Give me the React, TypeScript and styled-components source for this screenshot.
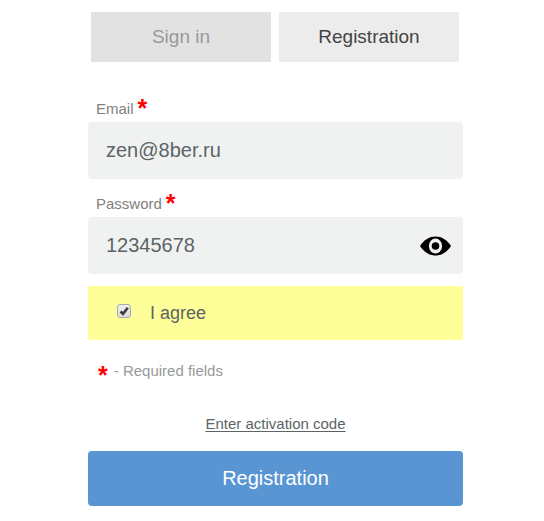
import React, { useState } from "react";
import styled, { createGlobalStyle } from "styled-components";

const GlobalStyle = createGlobalStyle`
  *, *::before, *::after { box-sizing: border-box; }
  body {
    margin: 0;
    background: #fff;
    color: #5a6268;
    font-family: "Liberation Sans", Arial, sans-serif;
  }
  button, input { font-family: inherit; }
`;

const Page = styled.main`
  padding: 12px 16px 15px 23px;
`;

const Panel = styled.form`
  display: flex;
  flex-direction: column;
  max-width: 375px;
  margin: 0 auto;
`;

const Tabs = styled.div`
  display: flex;
  gap: 8px;
  padding: 0 4px 0 3px;
  margin-bottom: 32px;
`;

const Tab = styled.button<{ $active: boolean }>`
  flex: 1;
  height: 50px;
  padding: 0;
  border: 0;
  background: ${(p) => (p.$active ? "#ececec" : "#e2e2e2")};
  color: ${(p) => (p.$active ? "#444" : "#999")};
  font-size: 19px;
  cursor: pointer;
`;

const Field = styled.div`
  display: flex;
  flex-direction: column;
  margin-bottom: 10px;
`;

const Label = styled.label`
  display: flex;
  align-items: center;
  gap: 4px;
  height: 28px;
  padding-left: 8px;
  color: #808080;
  font-size: 15px;
`;

const Star = styled.span`
  color: #f00;
  font-size: 25px;
  font-weight: bold;
  line-height: 28px;
`;

const InputBox = styled.div`
  display: flex;
  align-items: center;
  height: 57px;
  padding: 0 12px 0 18px;
  border-radius: 4px;
  background: #f0f2f2;
`;

const Input = styled.input`
  flex: 1;
  min-width: 0;
  height: 100%;
  padding: 0;
  border: 0;
  outline: 0;
  background: transparent;
  color: #5c6466;
  font-size: 20px;
`;

const EyeButton = styled.button`
  display: flex;
  padding: 0;
  border: 0;
  background: transparent;
  cursor: pointer;
`;

const Agreement = styled.label`
  display: flex;
  align-items: center;
  height: 54px;
  margin-top: 2px;
  padding-left: 29px;
  gap: 19px;
  background: #ffff99;
  color: #5c6466;
  font-size: 18px;
`;

const CheckWrap = styled.span`
  display: grid;
  width: 14px;
  height: 14px;
  margin-bottom: 4px;

  > * { grid-area: 1 / 1; }
  svg { pointer-events: none; }
`;

const Checkbox = styled.input`
  appearance: none;
  width: 14px;
  height: 14px;
  margin: 0;
  border: 1px solid #aaa;
  border-radius: 3px;
  background: linear-gradient(#eee, #dcdcdc);
`;

const Required = styled.p`
  display: flex;
  align-items: center;
  gap: 6px;
  height: 28px;
  margin: 16px 0 0;
  padding-left: 10px;
  color: #999;
  font-size: 15px;

  ${Star} { padding-top: 10px; }
`;

const CodeLink = styled.a`
  align-self: center;
  margin: 31px 0 18px;
  color: #5c6466;
  font-size: 15px;
  line-height: 18px;
  text-underline-offset: 2px;
`;

const Submit = styled.button`
  height: 55px;
  border: 0;
  border-radius: 4px;
  background: #5995d3;
  color: #fff;
  font-size: 20px;
  cursor: pointer;
`;

function Eye() {
  return (
    <svg width="31" height="20" viewBox="0 0 31 20" aria-hidden="true">
      <path d="M0 10C4 3.8 9.5.5 15.5.5S27 3.8 31 10C27 16.2 21.5 19.5 15.5 19.5S4 16.2 0 10Z" fill="#000" />
      <ellipse cx="15.5" cy="10" rx="6.6" ry="7.4" fill="#f0f2f2" />
      <circle cx="15.5" cy="10" r="3.8" fill="#000" />
    </svg>
  );
}

export default function App() {
  const [tab, setTab] = useState("Registration");
  const [agreed, setAgreed] = useState(true);
  const [visible, setVisible] = useState(true);

  return (
    <Page>
      <GlobalStyle />
      <Panel onSubmit={(e) => e.preventDefault()}>
        <Tabs>
          {["Sign in", "Registration"].map((name) => (
            <Tab key={name} type="button" $active={tab === name} onClick={() => setTab(name)}>
              {name}
            </Tab>
          ))}
        </Tabs>
        <Field>
          <Label htmlFor="email">Email <Star>*</Star></Label>
          <InputBox>
            <Input id="email" type="email" defaultValue="zen@8ber.ru" />
          </InputBox>
        </Field>
        <Field>
          <Label htmlFor="password">Password <Star>*</Star></Label>
          <InputBox>
            <Input id="password" type={visible ? "text" : "password"} defaultValue="12345678" />
            <EyeButton type="button" aria-label="Toggle password" onClick={() => setVisible(!visible)}>
              <Eye />
            </EyeButton>
          </InputBox>
        </Field>
        <Agreement>
          <CheckWrap>
            <Checkbox type="checkbox" checked={agreed} onChange={(e) => setAgreed(e.target.checked)} />
            {agreed && (
              <svg width="14" height="14" viewBox="0 0 14 14" aria-hidden="true">
                <path d="M3.5 7.5L6 9.8L10.8 3.8" fill="none" stroke="#3c3c3c" strokeWidth="2.6" />
              </svg>
            )}
          </CheckWrap>
          I agree
        </Agreement>
        <Required><Star>*</Star> - Required fields</Required>
        <CodeLink href="#code">Enter activation code</CodeLink>
        <Submit type="submit">Registration</Submit>
      </Panel>
    </Page>
  );
}
